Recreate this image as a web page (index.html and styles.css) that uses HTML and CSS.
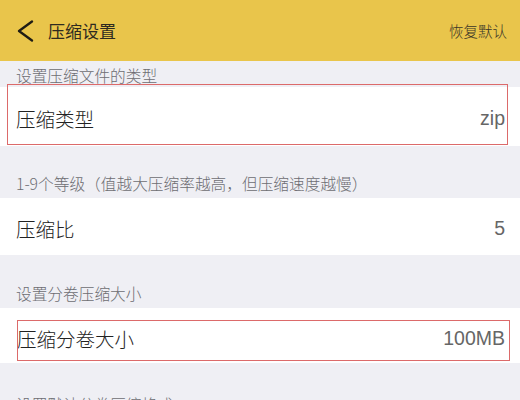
FILE: index.html
```html
<!DOCTYPE html>
<html lang="zh-CN">
<head>
<meta charset="utf-8">
<link rel="stylesheet" href="styles.css">
</head>
<body>
<div class="page">
  <header class="topbar">
    <div class="topbar-left">
      <svg class="back" width="18" height="22" viewBox="0 0 18 22"><path d="M16 1.5 L3 11 L16 20.5" fill="none" stroke="#1f1c14" stroke-width="2.3" stroke-linecap="round" stroke-linejoin="round"/></svg>
      <span class="title">压缩设置</span>
    </div>
    <span class="reset">恢复默认</span>
  </header>

  <section class="group group-first">
    <div class="label">设置压缩文件的类型</div>
    <div class="row row-a"><span class="name">压缩类型</span><span class="value">zip</span></div>
  </section>

  <section class="group">
    <div class="label">1-9个等级（值越大压缩率越高，但压缩速度越慢）</div>
    <div class="row row-b"><span class="name">压缩比</span><span class="value">5</span></div>
  </section>

  <section class="group group-third">
    <div class="label">设置分卷压缩大小</div>
    <div class="row row-c"><span class="name name-c">压缩分卷大小</span><span class="value">100MB</span></div>
  </section>

  <section class="group group-fourth">
    <div class="label">设置默认分卷压缩格式</div>
  </section>

  <div class="mark mark-1"></div>
  <div class="mark mark-2"></div>
</div>
</body>
</html>
```

FILE: styles.css
```css
html, body {
  margin: 0;
  padding: 0;
  width: 520px;
  height: 400px;
  overflow: hidden;
  background: #efeff4;
}
.page {
  position: relative;
  width: 520px;
  height: 400px;
  overflow: hidden;
  font-family: "Noto Sans CJK SC", "Noto Sans", sans-serif;
  font-weight: 300;
  color: #333;
}
.topbar {
  height: 61px;
  background: #e9c54b;
  display: flex;
  align-items: center;
  justify-content: space-between;
  padding: 0 13px 0 16px;
  box-sizing: border-box;
}
.topbar-left {
  display: flex;
  align-items: center;
  gap: 14px;
}
.back {
  display: block;
  margin-top: 1px;
}
.title {
  font-size: 17px;
  color: #2e2a20;
  line-height: 20px;
  font-weight: 400;
}
.reset {
  font-size: 14.5px;
  color: #3a3528;
  line-height: 20px;
}
.group {
  padding-top: 24px;
}
.group-first {
  padding-top: 0;
}
.group-third {
  padding-top: 25px;
}
.group-fourth {
  padding-top: 28px;
}
.label {
  height: 28px;
  line-height: 28px;
  padding-left: 16px;
  font-size: 15.7px;
  color: #6d6d72;
  white-space: nowrap;
}
.group-first .label {
  height: 26px;
  line-height: 30px;
}
.row {
  background: #fff;
  display: flex;
  align-items: center;
  justify-content: space-between;
  padding: 3px 15px 0 16px;
  box-sizing: border-box;
  font-size: 19.5px;
}
.row-a { height: 59px; }
.row-b { height: 57px; }
.row-c { height: 55px; padding-top: 6px; }
.name {
  color: #222;
}
.name-c {
  margin-left: 1px;
}
.value {
  color: #666;
  font-family: "Liberation Sans", "Noto Sans", sans-serif;
  font-weight: 400;
}
.mark {
  position: absolute;
  border: 1.5px solid #dc6a6a;
  box-sizing: border-box;
}
.mark-1 {
  left: 7px;
  top: 84px;
  width: 501px;
  height: 61px;
}
.mark-2 {
  left: 17px;
  top: 320px;
  width: 493px;
  height: 41px;
}
```
